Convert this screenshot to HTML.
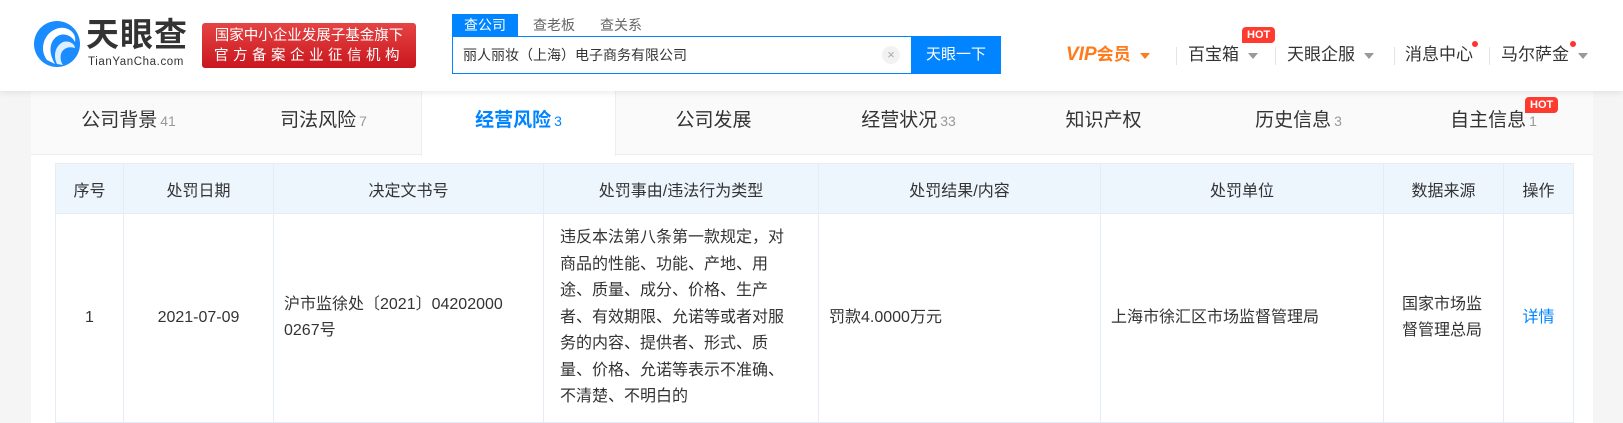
<!DOCTYPE html>
<html><head><meta charset="utf-8">
<style>
*{margin:0;padding:0;box-sizing:border-box}
body{width:1623px;height:423px;overflow:hidden;background:#f5f5f5;font-family:"Liberation Sans","Noto Sans CJK SC",sans-serif;color:#333;position:relative}
.hd{position:absolute;left:0;top:0;width:1623px;height:91px;background:#fff;box-shadow:0 2px 6px rgba(0,0,0,.08);z-index:2}
.abs{position:absolute}
.logo-t{left:86px;top:18px;font-size:33px;line-height:34px;font-weight:bold;color:#333;letter-spacing:1px}
.logo-s{left:88px;top:56px;font-size:11.5px;line-height:12px;color:#333;letter-spacing:.6px}
.badge{left:202px;top:23px;width:214px;height:45px;border-radius:3px;background:linear-gradient(#e54444,#c9171e);color:#fff;font-size:14.5px;text-align:center;line-height:20px;padding-top:3px}
.tab{top:14px;height:22px;font-size:14px;line-height:22px;color:#666}
.inp{left:452px;top:36px;width:460px;height:38px;border:1px solid #0084ff;border-right:none;font-size:14px;line-height:36px;padding-left:10px;color:#333}
.btn{left:911px;top:36px;width:90px;height:38px;background:#0084ff;color:#fff;font-size:15px;line-height:38px;text-align:center}
.nav{top:43px;font-size:17px;color:#333;line-height:24px;white-space:nowrap}
.tri{display:inline-block;width:0;height:0;border-left:5px solid transparent;border-right:5px solid transparent;border-top:6px solid #999;vertical-align:middle;margin-left:9px}
.sep{top:47px;width:1px;height:18px;background:#e5e5e5}
.hot{background:#ff3b30;color:#fff;font-size:11px;font-weight:bold;line-height:16px;padding:0 5px;border-radius:4px 4px 4px 0}
.dot{width:6px;height:6px;border-radius:50%;background:#f33}
.panel{position:absolute;left:31px;top:91px;width:1562px;height:332px;background:#fff}
.tabs{position:absolute;left:0;top:0;width:1562px;height:64px;background:#fafafa;border-bottom:1px solid #eee}
.tb{position:absolute;top:0;width:195px;height:64px;text-align:center;line-height:60px;font-size:19px;color:#333}
.tb span{font-size:14px;color:#999;margin-left:3px}
.tb.act{background:#fff;color:#0084ff;font-weight:bold;border-left:1px solid #eee;border-right:1px solid #eee;height:65px}
.tb.act span{color:#0084ff;font-weight:normal}
table{position:absolute;left:24px;top:72px;border-collapse:collapse;table-layout:fixed}
td,th{border:1px solid #e4edf6;font-size:16px;font-weight:normal;color:#333;text-align:center;vertical-align:middle}
th{background:#edf5fd;height:50px}
td{height:209px;line-height:26.5px}
td.l{text-align:left;padding:0 10px}
</style></head><body>
<div class="hd">
  <svg class="abs" style="left:33px;top:20px" width="48" height="48" viewBox="0 0 48 48">
    <circle cx="24" cy="24" r="23" fill="#1a8cff"/>
    <path d="M14 40 C6 30 10 12 26 8 C36 6 44 14 42 22 C38 14 28 12 22 18 C16 24 16 34 22 44 Z" fill="#fff"/>
    <path d="M24 44 C20 36 22 26 30 22 C36 20 42 24 42 28 C36 26 30 28 28 34 C27 38 28 42 30 45 Z" fill="#fff" opacity=".85"/>
  </svg>
  <div class="abs logo-t">天眼查</div>
  <div class="abs logo-s">TianYanCha.com</div>
  <div class="abs badge">国家中小企业发展子基金旗下<br><span style="letter-spacing:4.5px">官方备案企业征信机构</span></div>
  <div class="abs tab" style="left:452px;width:66px;background:#0084ff;color:#fff;text-align:center">查公司</div>
  <div class="abs tab" style="left:533px">查老板</div>
  <div class="abs tab" style="left:600px">查关系</div>
  <div class="abs inp">丽人丽妆（上海）电子商务有限公司</div>
  <div class="abs" style="left:882px;top:46px;width:18px;height:18px;border-radius:50%;background:#f2f2f2;color:#aaa;font-size:13px;line-height:18px;text-align:center">×</div>
  <div class="abs btn">天眼一下</div>
  <div class="abs nav" style="left:1066px;color:#ff7a1a;font-weight:bold"><i style="font-size:19px">VIP</i>会员<span class="tri" style="border-top-color:#ff7a1a"></span></div>
  <div class="abs sep" style="left:1176px"></div>
  <div class="abs nav" style="left:1188px">百宝箱<span class="tri"></span></div>
  <div class="abs hot" style="left:1242px;top:27px">HOT</div>
  <div class="abs sep" style="left:1275px"></div>
  <div class="abs nav" style="left:1287px">天眼企服<span class="tri"></span></div>
  <div class="abs sep" style="left:1394px"></div>
  <div class="abs nav" style="left:1405px">消息中心</div>
  <div class="abs dot" style="left:1472px;top:41px"></div>
  <div class="abs sep" style="left:1489px"></div>
  <div class="abs nav" style="left:1501px">马尔萨金<span class="tri"></span></div>
  <div class="abs dot" style="left:1570px;top:41px"></div>
</div>
<div class="panel">
  <div class="tabs">
    <div class="tb" style="left:0">公司背景<span>41</span></div>
    <div class="tb" style="left:195px">司法风险<span>7</span></div>
    <div class="tb act" style="left:390px">经营风险<span>3</span></div>
    <div class="tb" style="left:585px">公司发展</div>
    <div class="tb" style="left:780px">经营状况<span>33</span></div>
    <div class="tb" style="left:975px">知识产权</div>
    <div class="tb" style="left:1170px">历史信息<span>3</span></div>
    <div class="tb" style="left:1365px">自主信息<span>1</span></div>
    <div class="abs hot" style="left:1494px;top:6px">HOT</div>
  </div>
  <table>
    <colgroup><col style="width:68px"><col style="width:150px"><col style="width:270px"><col style="width:275px"><col style="width:282px"><col style="width:283px"><col style="width:120px"><col style="width:70px"></colgroup>
    <tr><th>序号</th><th>处罚日期</th><th>决定文书号</th><th>处罚事由/违法行为类型</th><th>处罚结果/内容</th><th>处罚单位</th><th>数据来源</th><th>操作</th></tr>
    <tr><td>1</td><td>2021-07-09</td><td class="l">沪市监徐处〔2021〕04202000<br>0267号</td><td class="l" style="padding:0 20px 0 16px">违反本法第八条第一款规定，对<br>商品的性能、功能、产地、用<br>途、质量、成分、价格、生产<br>者、有效期限、允诺等或者对服<br>务的内容、提供者、形式、质<br>量、价格、允诺等表示不准确、<br>不清楚、不明白的</td><td class="l">罚款4.0000万元</td><td class="l">上海市徐汇区市场监督管理局</td><td class="l" style="padding:0 18px">国家市场监<br>督管理总局</td><td style="color:#0084ff">详情</td></tr>
  </table>
</div>
</body></html>
